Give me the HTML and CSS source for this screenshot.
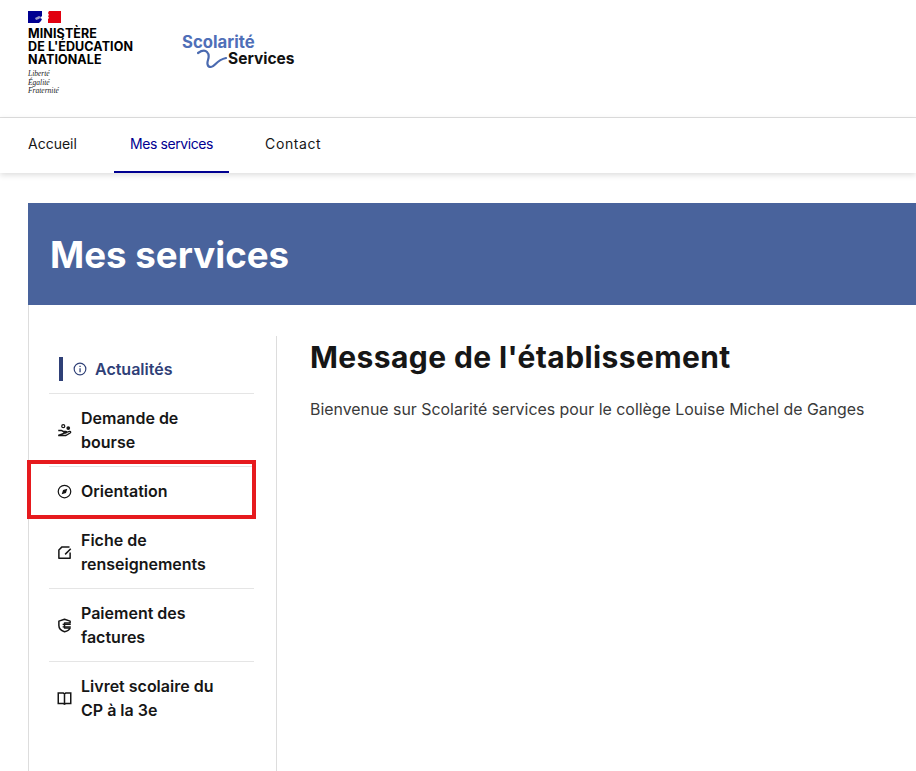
FILE: index.html
```html
<!DOCTYPE html>
<html lang="fr">
<head>
    <meta charset="UTF-8">
    <title>Scolarité Services - Mes services</title>
    <link rel="stylesheet" href="styles.css">
</head>
<body>

<header class="header">
    <div class="logo-rf">
        <svg class="flag" width="33" height="12" viewBox="0 0 33 12">
            <rect width="33" height="12" fill="#fff"/>
            <rect width="14" height="12" fill="#000091"/>
            <rect x="20" width="13" height="12" fill="#e1000f"/>
            <path d="M14 0h7l-1 2 1 2-1 1 1 2-1 1v2l-2 1-1 1h-6l2-2 1-2-2-1 2-2z" fill="#fff"/>
            <path d="M7 7l4-2 2 1-2 2-3 1z" fill="#9a9ac8"/>
        </svg>
        <div class="ministere">MINISTÈRE<br>DE L'ÉDUCATION<br>NATIONALE</div>
        <div class="devise">Liberté<br>Égalité<br>Fraternité</div>
    </div>
    <div class="logo-scolarite">
        <div class="logo-top">Scolarité</div>
        <div class="logo-bottom">
            <svg width="31" height="20" viewBox="0 0 31 20">
                <path d="M1 4c3-2 7-3 9-1s2 5 1 8-1 7 3 7 5-7 15-9" fill="none" stroke="#4a6ab0" stroke-width="2.200" stroke-linecap="round"/>
            </svg>
            <span>Services</span>
        </div>
    </div>
</header>

<nav class="nav">
    <a class="nav-link" href="#">Accueil</a>
    <a class="nav-link active" href="#">Mes services</a>
    <a class="nav-link contact" href="#">Contact</a>
</nav>

<main class="page">
    <div class="banner"><h1>Mes services</h1></div>

    <div class="content">
        <aside class="sidebar">
            <ul class="menu">
                <li class="menu-item current">
                    <svg class="icon" viewBox="0 0 24 24"><circle cx="12" cy="12" r="10" fill="none" stroke="currentColor" stroke-width="2"/><path d="M11 6.500h2.200v2.200H11zM11 10.500h2.200v7H11z" fill="currentColor"/></svg>
                    <span>Actualités</span>
                </li>
                <li class="menu-item">
                    <svg class="icon" viewBox="0 0 24 24"><path d="M2 12h5l3 1.500h4c1.500 0 1.500 2.500 0 2.500h-4M14 15.500l6-2c2-.5 2.500 1.500 1 2.500l-7 4H2z" fill="none" stroke="currentColor" stroke-width="2.200"/><circle cx="10" cy="5" r="2.400" fill="none" stroke="currentColor" stroke-width="2"/><circle cx="18" cy="8" r="3" fill="currentColor"/></svg>
                    <span>Demande de bourse</span>
                </li>
                <li class="menu-item">
                    <svg class="icon" viewBox="0 0 24 24"><circle cx="12" cy="12" r="10" fill="none" stroke="currentColor" stroke-width="2"/><path d="M16.500 7.500l-2.200 6.800-6.800 2.200 2.200-6.800z" fill="currentColor"/></svg>
                    <span>Orientation</span>
                </li>
                <li class="menu-item">
                    <svg class="icon" viewBox="0 0 24 24"><path d="M20 3H8L3 8v13h18v-9" fill="none" stroke="currentColor" stroke-width="2.400" stroke-linejoin="round"/><path d="M22 6l-9 9" stroke="currentColor" stroke-width="2.400"/></svg>
                    <span>Fiche de renseignements</span>
                </li>
                <li class="menu-item">
                    <svg class="icon" viewBox="0 0 24 24"><path d="M12 2l9 3v3h-9v8h9c-1 3-5 5-9 6-6-2-9-5-9-10V5z" fill="none" stroke="currentColor" stroke-width="2.400" stroke-linejoin="round"/><path d="M9 10h13M9 14h13" stroke="currentColor" stroke-width="2"/></svg>
                    <span>Paiement des factures</span>
                </li>
                <li class="menu-item">
                    <svg class="icon" viewBox="0 0 24 24"><path d="M2 3h8l2 2 2-2h8v17h-8l-2 1-2-1H2zM12 5v16" fill="none" stroke="currentColor" stroke-width="2.400"/></svg>
                    <span>Livret scolaire du CP à la 3e</span>
                </li>
            </ul>
        </aside>

        <section class="message">
            <h2>Message de l'établissement</h2>
            <p>Bienvenue sur Scolarité services pour le collège Louise Michel de Ganges</p>
        </section>
    </div>

    <div class="highlight"></div>
</main>

</body>
</html>
```

FILE: styles.css
```css
* {
    box-sizing: border-box;
}
html, body {
    height: 771px;
    overflow: hidden;
}
body {
    margin: 0;
    font-family: Inter, "Noto Sans", sans-serif;
    color: #161616;
    background: #fff;
}
.header {
    height: 118px;
    padding: 11px 28px 0;
    border-bottom: 1px solid #e0e0e0;
    display: flex;
    gap: 49px;
}
.flag {
    display: block;
}
.ministere {
    margin-top: 4px;
    font-size: 12.500px;
    font-weight: 700;
    line-height: 13px;
    color: #000;
    letter-spacing: 0.1px;
    white-space: nowrap;
}
.devise {
    margin-top: 4px;
    font-family: "Liberation Serif", serif;
    font-style: italic;
    font-size: 7.500px;
    line-height: 8.500px;
    color: #222;
}
.logo-scolarite {
    margin-top: 21px;
    font-weight: 700;
}
.logo-top {
    font-size: 16.700px;
    line-height: 20px;
    color: #4f6fb8;
}
.logo-bottom {
    display: flex;
    align-items: center;
    margin: -3px 0 0 15px;
    font-size: 15.500px;
    line-height: 20px;
    color: #111;
}
.nav {
    height: 55px;
    padding-left: 12px;
    display: flex;
    gap: 21px;
    box-shadow: 0 2px 6px rgba(0,0,0,0.14);
}
.nav-link {
    padding: 0 16px;
    line-height: 51px;
    height: 55px;
    font-size: 14px;
    color: #161616;
    text-decoration: none;
}
.nav-link.active {
    color: #000091;
    border-bottom: 2px solid #000091;
    letter-spacing: -0.4px;
}
.nav-link.contact {
    letter-spacing: 0.6px;
    margin-left: -1px;
}
.page {
    position: relative;
    padding: 30px 0 0 28px;
}
.banner {
    height: 102px;
    background: #49639c;
    padding-left: 22px;
    display: flex;
    align-items: center;
}
.banner h1 {
    margin: 0;
    font-size: 36.700px;
    font-weight: 700;
    color: #fff;
}
.content {
    display: flex;
    height: 466px;
    padding-top: 31px;
    border-left: 1px solid #ddd;
}
.sidebar {
    width: 248px;
    border-right: 1px solid #ddd;
    padding: 0 22px 0 20px;
}
.menu {
    list-style: none;
    margin: 0;
    padding: 0;
}
.menu-item {
    display: flex;
    align-items: center;
    gap: 9px;
    padding: 12px 8px;
    font-size: 16px;
    font-weight: 600;
    line-height: 24px;
    border-bottom: 1px solid #e5e5e5;
}
.menu-item:last-child {
    border-bottom: none;
}
.menu-item span {
    flex: 1;
    padding-right: 30px;
}
.icon {
    width: 15px;
    height: 15px;
    flex: none;
    color: #161616;
}
.menu-item.current {
    height: 58px;
    padding: 17px 0 9px 24px;
    gap: 8px;
    color: #2f4077;
    background: linear-gradient(#2f4077, #2f4077) 10px 21px / 4px 24px no-repeat;
}
.menu-item.current .icon {
    width: 14px;
    height: 14px;
    color: #2f4077;
}
.message {
    padding-left: 33px;
}
.message h2 {
    margin: 0;
    font-size: 30px;
    font-weight: 700;
    line-height: 42px;
    letter-spacing: 0.4px;
}
.message p {
    margin: 20px 0 0;
    font-size: 15.900px;
    line-height: 24px;
    color: #3a3a3a;
    white-space: nowrap;
}
.highlight {
    position: absolute;
    left: 27px;
    top: 287px;
    width: 229px;
    height: 59px;
    border: 4px solid #e61a1e;
}
```
